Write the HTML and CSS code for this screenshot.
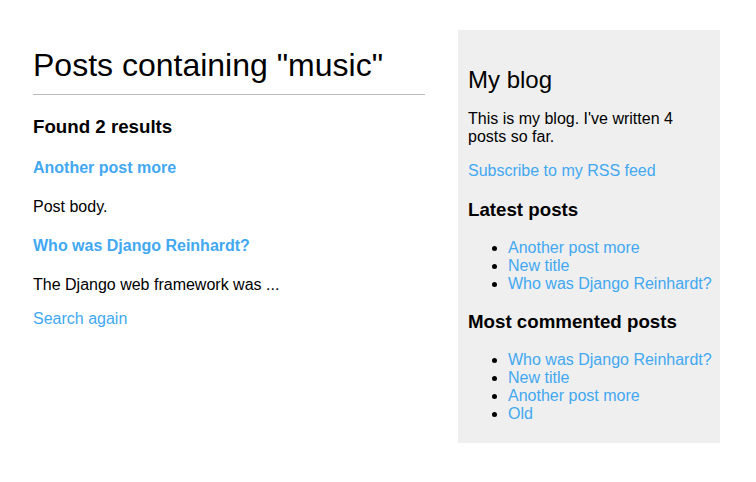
FILE: index.html
```html
<!DOCTYPE html>
<html>
<head>
<meta charset="utf-8">
<title>Search</title>
<link rel="stylesheet" href="styles.css">
</head>
<body>
<div class="page">
  <div class="content">
    <h1>Posts containing "music"</h1>
    <h3>Found 2 results</h3>
    <h4><a href="#">Another post more</a></h4>
    <p>Post body.</p>
    <h4><a href="#">Who was Django Reinhardt?</a></h4>
    <p>The Django web framework was ...</p>
    <p><a href="#">Search again</a></p>
  </div>
  <div class="sidebar">
    <h2>My blog</h2>
    <p>This is my blog. I've written 4 posts so far.</p>
    <p><a href="#">Subscribe to my RSS feed</a></p>
    <h3>Latest posts</h3>
    <ul>
      <li><a href="#">Another post more</a></li>
      <li><a href="#">New title</a></li>
      <li><a href="#">Who was Django Reinhardt?</a></li>
    </ul>
    <h3>Most commented posts</h3>
    <ul>
      <li><a href="#">Who was Django Reinhardt?</a></li>
      <li><a href="#">New title</a></li>
      <li><a href="#">Another post more</a></li>
      <li><a href="#">Old</a></li>
    </ul>
  </div>
</div>
</body>
</html>
```
FILE: styles.css
```css
html, body {
  margin: 0;
  padding: 0;
  background: #fff;
}
body {
  font-family: "Liberation Sans", Arial, Helvetica, sans-serif;
  font-size: 16px;
  color: #000;
}
a {
  color: #42a8f2;
  text-decoration: none;
}
.page {
  display: flex;
  align-items: flex-start;
  padding-top: 30px;
}
.content {
  width: 392px;
  margin-left: 33px;
}
.content h1 {
  font-size: 32px;
  font-weight: normal;
  margin: 17px 0 20.5px;
  padding: 0 0 10px;
  border-bottom: 1px solid #bbb;
}
h3 {
  font-size: 18.72px;
  margin: 18.72px 0;
}
.content h4 {
  font-size: 16px;
  margin: 21px 0;
}
.content p {
  margin: 16.5px 0;
}
p {
  margin: 16px 0;
}
.sidebar {
  box-sizing: border-box;
  width: 262px;
  height: 413px;
  margin-left: 33px;
  padding: 10px;
  background: #efefef;
}
.sidebar h2 {
  font-size: 24px;
  font-weight: normal;
  margin: 26px 0 0;
}
.sidebar h3 {
  margin: 18.72px 0 18px;
}
.sidebar ul {
  margin: 16px 0;
  padding-left: 40px;
}
.sidebar li {
  white-space: nowrap;
}
```
